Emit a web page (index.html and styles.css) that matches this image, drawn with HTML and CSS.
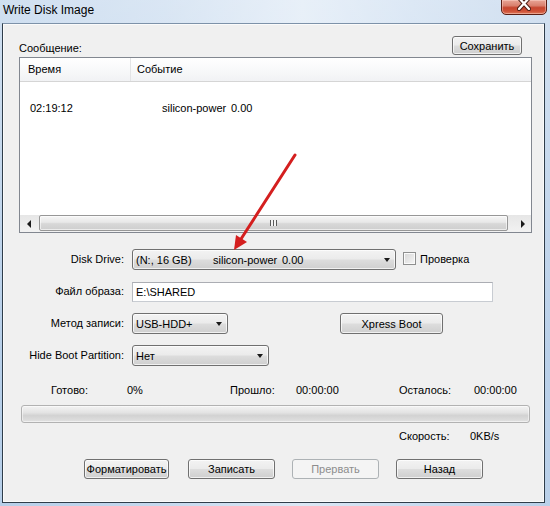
FILE: index.html
```html
<!DOCTYPE html>
<html lang="ru">
<head>
    <meta charset="UTF-8">
    <meta name="viewport" content="width=device-width, initial-scale=1.0">
    <title>Write Disk Image</title>
    <link rel="stylesheet" href="styles.css">
</head>
<body>

<div class="window">
    <div class="titlebar">
        <span class="title">Write Disk Image</span>
        <div class="close-btn">
            <svg width="14" height="11" viewBox="0 0 14 11">
                <path d="M2 -2 L12 9 M12 -2 L2 9" stroke="#4a1b12" stroke-width="4.2" stroke-linecap="round"/>
                <path d="M2 -2 L12 9 M12 -2 L2 9" stroke="#ffffff" stroke-width="2.3" stroke-linecap="round"/>
            </svg>
        </div>
    </div>

    <div class="client">
        <div class="log-head">
            <span class="caption">Сообщение:</span>
            <button class="btn btn-save">Сохранить</button>
        </div>

        <div class="listview">
            <div class="lv-header">
                <div class="lv-col lv-col-time">Время</div>
                <div class="lv-col lv-col-event">Событие</div>
            </div>
            <div class="lv-body">
                <div class="lv-row">
                    <span class="lv-time">02:19:12</span>
                    <span class="lv-name">silicon-power</span>
                    <span class="lv-size">0.00</span>
                </div>
            </div>
            <div class="hscroll">
                <div class="sb-arrow"><span class="tri tri-left"></span></div>
                <div class="sb-track">
                    <div class="sb-thumb"><span class="grip"></span></div>
                </div>
                <div class="sb-arrow"><span class="tri tri-right"></span></div>
            </div>
        </div>

        <div class="form">
            <span class="f-label">Disk Drive:</span>
            <div class="f-ctrl">
                <div class="combo combo-drive">
                    <span class="drv-letter">(N:, 16 GB)</span>
                    <span class="drv-name">silicon-power</span>
                    <span class="combo-text">0.00</span>
                    <span class="tri tri-down"></span>
                </div>
                <label class="check"><span class="check-box"></span>Проверка</label>
            </div>

            <span class="f-label">Файл образа:</span>
            <div class="f-ctrl">
                <div class="textbox">E:\SHARED</div>
            </div>

            <span class="f-label">Метод записи:</span>
            <div class="f-ctrl">
                <div class="combo combo-method">
                    <span class="combo-text">USB-HDD+</span>
                    <span class="tri tri-down"></span>
                </div>
                <button class="btn btn-xpress">Xpress Boot</button>
            </div>

            <span class="f-label">Hide Boot Partition:</span>
            <div class="f-ctrl">
                <div class="combo combo-hide">
                    <span class="combo-text">Нет</span>
                    <span class="tri tri-down"></span>
                </div>
            </div>
        </div>

        <div class="stats">
            <span>Готово:</span>
            <span>0%</span>
            <span>Прошло:</span>
            <span>00:00:00</span>
            <span>Осталось:</span>
            <span>00:00:00</span>
        </div>

        <div class="progress"></div>

        <div class="speed">
            <span class="speed-label">Скорость:</span>
            <span>0KB/s</span>
        </div>

        <div class="actions">
            <button class="btn btn-format">Форматировать</button>
            <button class="btn btn-write">Записать</button>
            <button class="btn btn-abort" disabled>Прервать</button>
            <button class="btn btn-back">Назад</button>
        </div>
    </div>

    <svg class="annotation" width="550" height="506" viewBox="0 0 550 506">
        <line x1="295" y1="155" x2="241" y2="239" stroke="#d41f1f" stroke-width="3" stroke-linecap="round"/>
        <polygon points="234,250 247,242 236,235" fill="#d41f1f"/>
    </svg>
</div>

</body>
</html>
```

FILE: styles.css
```css
body {
    margin: 0;
    padding: 0;
    overflow: hidden;
    font-family: "Liberation Sans", Arial, sans-serif;
    font-size: 11px;
    color: #000;
}

.window {
    position: relative;
    width: 550px;
    height: 506px;
    display: flex;
    flex-direction: column;
    background:
        linear-gradient(to bottom, rgba(255, 255, 255, 0.35), rgba(255, 255, 255, 0) 70%),
        linear-gradient(to right, #b7cfe9 0%, #c6d9ee 30%, #dce8f5 55%, #cadcf0 75%, #bad0e9 100%);
}

/* title bar */

.titlebar {
    height: 23px;
    display: flex;
    justify-content: space-between;
    align-items: flex-start;
    flex-shrink: 0;
}

.title {
    font-size: 12px;
    line-height: 14px;
    padding: 3px 0 0 3px;
}

.close-btn {
    width: 44px;
    height: 14px;
    margin: -1px 3px 0 0;
    border: 1px solid #5a1e14;
    border-radius: 0 0 5px 5px;
    background: linear-gradient(to bottom, #e8a596 0%, #d9806e 40%, #c6462f 55%, #cf5238 80%, #de7a5c 100%);
    box-shadow: inset 0 0 0 1px rgba(255, 220, 210, 0.45);
    display: flex;
    justify-content: center;
    align-items: flex-start;
}

/* client area */

.client {
    flex: 1;
    margin: 0 5px 3px 2px;
    padding-top: 12px;
    border: 1px solid #2f3d4a;
    border-top-color: #7d92a9;
    background: #f0f0f0;
    box-shadow: inset 0 0 0 1px #fbfbfb;
    display: flex;
    flex-direction: column;
}

.log-head {
    display: flex;
    justify-content: space-between;
    align-items: flex-end;
    margin: 0 22px 2px 16px;
}

.caption {
    line-height: 13px;
}

/* buttons */

.btn {
    font-family: "Liberation Sans", Arial, sans-serif;
    font-size: 11px;
    color: #000;
    height: 20px;
    padding: 0;
    border: 1px solid #707070;
    border-radius: 3px;
    background: linear-gradient(to bottom, #f3f3f3 0%, #ebebeb 48%, #dddddd 52%, #cfcfcf 100%);
    box-shadow: inset 0 0 0 1px rgba(255, 255, 255, 0.7);
}

.btn:disabled {
    color: #8d8d8d;
    border-color: #adb2b5;
    background: #f4f4f4;
    box-shadow: none;
}

.btn-save {
    width: 70px;
    height: 19px;
}

/* list view */

.listview {
    height: 176px;
    margin: 0 12px 0 16px;
    border: 1px solid #828790;
    background: #fff;
    display: flex;
    flex-direction: column;
    box-sizing: border-box;
}

.lv-header {
    height: 23px;
    display: flex;
    border-bottom: 1px solid #d5d5d5;
    background: linear-gradient(to bottom, #ffffff 0%, #f7f8f9 60%, #f1f2f4 100%);
    flex-shrink: 0;
}

.lv-col {
    line-height: 23px;
}

.lv-col-time {
    width: 102px;
    padding-left: 8px;
    border-right: 1px solid #e3e4e6;
}

.lv-col-event {
    padding-left: 6px;
}

.lv-body {
    flex: 1;
    padding-top: 20px;
}

.lv-row {
    display: flex;
    line-height: 13px;
}

.lv-time {
    width: 132px;
    padding-left: 10px;
}

.lv-name {
    width: 69px;
}

/* scrollbar */

.hscroll {
    height: 17px;
    display: flex;
    background: linear-gradient(to bottom, #e6e6e6, #f2f2f2);
    flex-shrink: 0;
}

.sb-arrow {
    width: 17px;
    display: flex;
    justify-content: center;
    align-items: center;
}

.sb-track {
    flex: 1;
    padding: 0 6px 0 2px;
    display: flex;
}

.sb-thumb {
    flex: 1;
    margin: 0 0 1px;
    border: 1px solid #979797;
    border-radius: 2px;
    background: linear-gradient(to bottom, #f6f6f6 0%, #e8e8e8 45%, #d8d8d8 55%, #cecece 100%);
    box-shadow: inset 0 0 0 1px rgba(255, 255, 255, 0.6);
    display: flex;
    justify-content: center;
    align-items: center;
}

.grip {
    width: 7px;
    height: 6px;
    background: repeating-linear-gradient(to right, #5b5b5b 0, #5b5b5b 1px, #f4f4f4 1px, #f4f4f4 3px);
}

.tri {
    width: 0;
    height: 0;
    border-style: solid;
}

.tri-left {
    border-width: 4px 4px 4px 0;
    border-color: transparent #1a1a1a transparent transparent;
}

.tri-right {
    border-width: 4px 0 4px 4px;
    border-color: transparent transparent transparent #1a1a1a;
}

.tri-down {
    border-width: 4px 3.5px 0 3.5px;
    border-color: #1a1a1a transparent transparent transparent;
    margin: 0 5px 0 auto;
}

/* form */

.form {
    display: grid;
    grid-template-columns: 121px 1fr;
    grid-auto-rows: 21px;
    column-gap: 8px;
    row-gap: 11px;
    margin-top: 16px;
}

.f-label {
    text-align: right;
    align-self: center;
    line-height: 13px;
}

.f-ctrl {
    display: flex;
    align-items: center;
}

.combo {
    height: 21px;
    box-sizing: border-box;
    border: 1px solid #707070;
    border-radius: 3px;
    background: linear-gradient(to bottom, #f3f3f3 0%, #ebebeb 48%, #dddddd 52%, #cfcfcf 100%);
    box-shadow: inset 0 0 0 1px rgba(255, 255, 255, 0.7);
    display: flex;
    align-items: center;
    padding-left: 3px;
}

.combo-drive {
    width: 264px;
}

.drv-letter {
    width: 77px;
}

.drv-name {
    width: 69px;
}

.combo-method {
    width: 96px;
}

.combo-hide {
    width: 137px;
}

.check {
    display: flex;
    align-items: center;
    margin-left: 7px;
    margin-top: -2px;
}

.check-box {
    width: 11px;
    height: 11px;
    border: 1px solid #8e8f8f;
    background: linear-gradient(135deg, #d6d6d6, #f6f6f6);
    box-shadow: inset 0 0 0 1px #fafafa;
    margin-right: 4px;
}

.textbox {
    width: 361px;
    height: 20px;
    box-sizing: border-box;
    border: 1px solid #c8ccd2;
    border-top-color: #abadb3;
    border-left-color: #b7bac0;
    background: #fff;
    line-height: 18px;
    padding-left: 3px;
}

.btn-xpress {
    width: 103px;
    height: 21px;
    margin-left: 112px;
}

/* progress */

.stats {
    display: grid;
    grid-template-columns: 76px 103px 66px 103px 75px auto;
    line-height: 13px;
    margin: 18px 0 0 48px;
}

.progress {
    height: 18px;
    margin: 8px 14px 0 18px;
    box-sizing: border-box;
    border: 1px solid #b2b2b2;
    border-radius: 3px;
    background: linear-gradient(to bottom, #f3f3f3 0%, #e4e4e4 40%, #d2d2d2 60%, #e1e1e1 100%);
    box-shadow: inset 0 0 0 1px rgba(255, 255, 255, 0.5);
}

.speed {
    display: flex;
    line-height: 13px;
    margin: 7px 0 0 396px;
}

.speed-label {
    width: 71px;
}

.actions {
    display: flex;
    margin: 16px 0 0 81px;
}

.btn-format {
    width: 85px;
}

.btn-write {
    width: 87px;
    margin-left: 19px;
}

.btn-abort {
    width: 87px;
    margin-left: 17px;
}

.btn-back {
    width: 87px;
    margin-left: 17px;
}

/* red pointer drawn over the dialog */

.annotation {
    position: absolute;
    top: 0;
    left: 0;
    pointer-events: none;
}
```
